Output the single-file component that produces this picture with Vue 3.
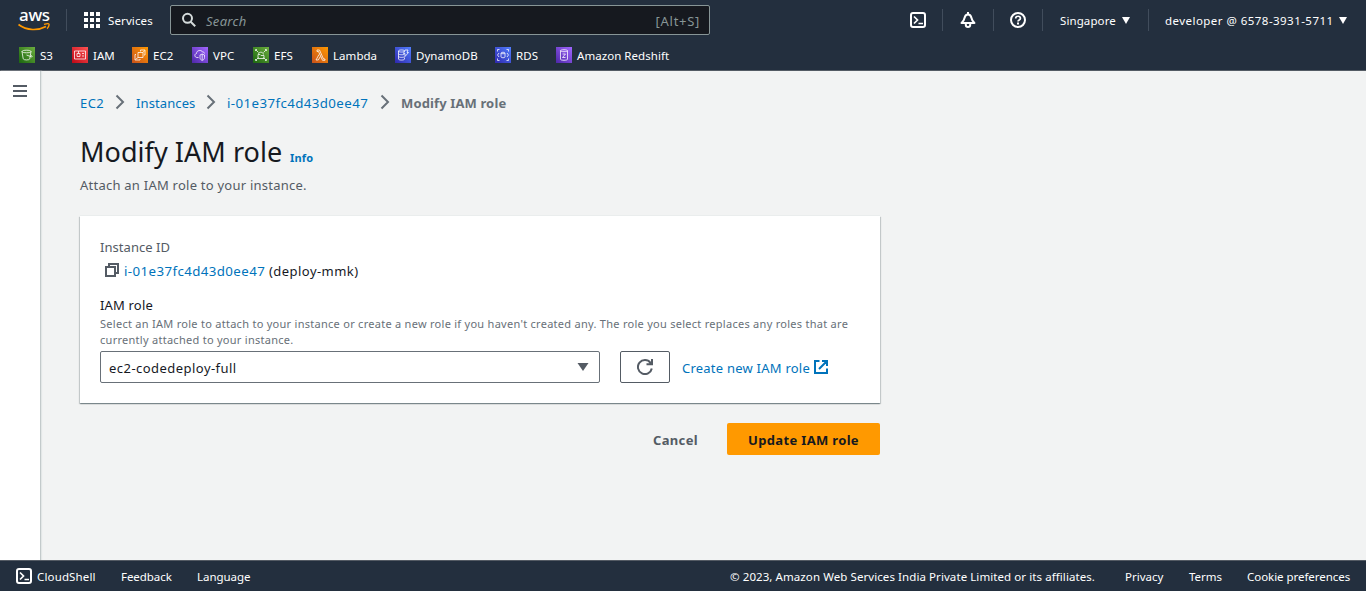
<script setup>
const services = [
  { name: 'S3', tone: 'green', icon: 's3' },
  { name: 'IAM', tone: 'red', icon: 'iam' },
  { name: 'EC2', tone: 'orange', icon: 'ec2' },
  { name: 'VPC', tone: 'purple', icon: 'vpc' },
  { name: 'EFS', tone: 'green', icon: 'efs' },
  { name: 'Lambda', tone: 'orange', icon: 'lambda' },
  { name: 'DynamoDB', tone: 'blue', icon: 'dynamo' },
  { name: 'RDS', tone: 'blue', icon: 'rds' },
  { name: 'Amazon Redshift', tone: 'purple', icon: 'redshift' }
]
const glyphs = {
  s3: 'M3 4.500C3 2.800 12 2.800 12 4.500S3 6.200 3 4.500l1.200 7.300c.3 1.500 6.300 1.500 6.600 0L12 4.500M7.500 8l4.800 1.800c1.300.500 1.300-.800-.600-1.700',
  iam: 'M2.500 4h11v8h-11zM5 6.500h3v3H5zM10 6.500h2M10 9h2M6.500 4v2.500',
  ec2: 'M6 5.500h5v5H6zM4 7.500H3v5.500h5v-1M8.500 4.500V3H13v5h-1M11 5.500l1.500-2M6 10.500l-2.500 2',
  vpc: 'M6.500 10.500H5C2.500 10.500 2 7 4.500 6.500 4.500 3 9.500 2.500 10.500 5c1.500 0 2 .700 2 1.500M8 8l2.200-1 2.300 1v2.500c0 1.500-.800 2.300-2.300 3C8.700 12.800 8 12 8 10.500zM10.200 7v6',
  efs: 'M3 3l2.500 2.500M13 3l-2.500 2.500M3 13l2.500-2.500M13 13l-2.500-2.500M5 7.500h2l1 1h3v3H5zM2.500 4V2.500H4M12 2.500h1.500V4M2.500 12v1.500H4M12 13.500h1.500V12M5.500 7C6 4.500 10 4.500 10.500 7.500',
  lambda: 'M5 3h2.500l4 9h1.500v1.300h-2.500L6.500 4.500H5zM7 7.500L4 13h2.300l2-3.500'
  , dynamo: 'M3.500 4c0-1.400 6-1.400 6 0s-6 1.400-6 0v8c0 1.400 6 1.400 6 0v-1.500M3.500 6.700c0 1.300 5 1.300 6 .500M3.500 9.300c0 1.300 5 1.300 6 .500M10 3h3l-1 2.500h1.500L10 9.500V6.500H8.500z',
  rds: 'M6 6c0-1 4-1 4 0v4c0 1-4 1-4 0zM6 6c0 1 4 1 4 0M2.500 4.500v-2h2M11.500 2.500h2v2M13.500 11.500v2h-2M4.500 13.500h-2v-2M4 6L2.500 8 4 10M12 6l1.500 2-1.500 2',
  redshift: 'M4.500 3.700c0-1.300 7-1.300 7 0s-7 1.300-7 0v8.600c0 1.300 7 1.300 7 0V3.700M6.500 7h3l-3 3.500h3'
}
</script>

<template>
  <div class="page">
    <header class="top">
      <div class="bar">
        <div class="aws">
          <span>aws</span>
          <svg viewBox="0 0 34 10" width="34" height="10" fill="none" stroke="#f90">
            <path d="M.500 2.500C9 8.800 20 8.800 28 4.500" stroke-width="1.700" />
            <path d="M26 2.400c3-.900 4.800-.800 5-.300.300.700-.500 3.500-2 4.500" stroke-width="1.400" />
          </svg>
        </div>
        <i class="sep"></i>
        <svg class="grid" width="16" height="16" viewBox="0 0 16 16">
          <path d="M0 0h4v4H0zM6 0h4v4H6zM12 0h4v4h-4zM0 6h4v4H0zM6 6h4v4H6zM12 6h4v4h-4zM0 12h4v4H0zM6 12h4v4H6zM12 12h4v4h-4z" fill="#fff" />
        </svg>
        <span class="services">Services</span>
        <div class="search">
          <svg width="16" height="16" viewBox="0 0 16 16" fill="none" stroke="#d5dbdb" stroke-width="2">
            <circle cx="5.500" cy="6.300" r="4.500" /><path d="M8.700 9.800l4.500 4.500" />
          </svg>
          <span class="placeholder">Search</span>
          <span class="key">[Alt+S]</span>
        </div>
        <div class="tools">
          <span class="tool">
            <svg width="16" height="16" viewBox="0 0 16 16" fill="none" stroke="#fff" stroke-width="2"><rect x="1" y="1" width="14" height="14" rx="2" /><path d="M4 4.500L7.500 8 4 11.500M8.500 11.500H13" stroke-width="1.700" /></svg>
          </span>
          <span class="tool bell">
            <svg width="16" height="16" viewBox="0 0 16 16" fill="none" stroke="#fff" stroke-width="2"><path d="M1.500 11C3.500 9.500 4 8.500 4.500 6 5 3.500 6.300 2.500 8 2.500S11 3.500 11.500 6c.500 2.500 1 3.500 3 5z" stroke-linejoin="round" /><path d="M8 0v2.500M5.800 12v1c0 2.600 4.400 2.600 4.400 0v-1" /></svg>
          </span>
          <span class="tool help">
            <svg width="16" height="16" viewBox="0 0 16 16" fill="none" stroke="#fff" stroke-width="2"><circle cx="8" cy="8" r="7" /><path d="M5.700 6.500c0-3 4.700-3 4.700 0 0 1.500-2.400 1.500-2.400 3" stroke-width="1.700" /><path d="M8 10.600v1.900" /></svg>
          </span>
          <span class="menu region"><span class="sing">Singapore</span><svg width="8" height="7" viewBox="0 0 8 7"><path d="M0 0h8L4 7z" fill="#fff" /></svg></span>
          <span class="menu account"><span class="dev">developer @ 6578-3931-5711</span><svg width="8" height="7" viewBox="0 0 8 7"><path d="M0 0h8L4 7z" fill="#fff" /></svg></span>
        </div>
      </div>
      <nav class="favs">
        <a v-for="s in services" :key="s.name">
          <span class="chip" :class="s.tone"><svg width="16" height="16" viewBox="0 0 16 16"><path :d="glyphs[s.icon]" /></svg></span>
          <span>{{ s.name }}</span>
        </a>
      </nav>
    </header>

    <div class="body">
      <aside><svg width="14" height="12" viewBox="0 0 14 12"><path d="M0 1h14M0 6h14M0 11h14" stroke="#545b64" stroke-width="2" /></svg></aside>
      <main>
        <nav class="crumbs">
          <a class="first">EC2</a>
          <svg width="10" height="16" viewBox="0 0 10 16"><path d="M1.500 1.500L8 8l-6.500 6.500" /></svg>
          <a class="inst">Instances</a>
          <svg width="10" height="16" viewBox="0 0 10 16"><path d="M1.500 1.500L8 8l-6.500 6.500" /></svg>
          <a class="id">i-01e37fc4d43d0ee47</a>
          <svg width="10" height="16" viewBox="0 0 10 16"><path d="M1.500 1.500L8 8l-6.500 6.500" /></svg>
          <b>Modify IAM role</b>
        </nav>
        <div class="title"><h1>Modify IAM role</h1><a>Info</a></div>
        <p class="sub">Attach an IAM role to your instance.</p>
        <section class="card">
          <div class="label">Instance ID</div>
          <div class="value">
            <svg width="14" height="14" viewBox="0 0 14 14" fill="none" stroke="#545b64" stroke-width="2"><path d="M1 4h9v9H1zM4 4V1h9v9h-3" /></svg>
            <a class="id">i-01e37fc4d43d0ee47</a><span class="nm">(deploy-mmk)</span>
          </div>
          <div class="field">IAM role</div>
          <div class="hint">
            <div>Select an IAM role to attach to your instance or create a new role if you haven't created any. The role you select replaces any roles that are</div>
            <div>currently attached to your instance.</div>
          </div>
          <div class="row">
            <div class="select"><span>ec2-codedeploy-full</span><svg width="12" height="8" viewBox="0 0 12 8"><path d="M.500 0h11L6 8z" fill="#545b64" /></svg></div>
            <button class="refresh"><svg width="16" height="16" viewBox="0 0 16 16" fill="none" stroke="#545b64" stroke-width="2"><path d="M14.800 9.500A7 7 0 1 1 13.500 3.800L15 5.300M15 0v5.300H9.500" /></svg></button>
            <a class="create">Create new IAM role</a>
            <svg class="ext" width="14" height="14" viewBox="0 0 14 14" fill="none" stroke="#0073bb" stroke-width="2"><path d="M5.500 1H1v12h12V8.500M8 1h5v5M13 1L5 9" /></svg>
          </div>
        </section>
        <div class="actions"><button class="cancel">Cancel</button><button class="update">Update IAM role</button></div>
      </main>
    </div>

    <footer>
      <svg width="16" height="16" viewBox="0 0 16 16" fill="none" stroke="#fff" stroke-width="2"><rect x="1" y="1" width="14" height="14" rx="2" /><path d="M4 4.500L7.500 8 4 11.500M8.500 11.500H13" stroke-width="1.700" /></svg>
      <span class="cs">CloudShell</span><span class="fb">Feedback</span><span class="lang">Language</span>
      <div class="legal"><span class="copy">© 2023, Amazon Web Services India Private Limited or its affiliates.</span><span>Privacy</span><span>Terms</span><span class="cookie">Cookie preferences</span></div>
    </footer>
  </div>
</template>

<style>
body { background: #f2f3f3; overflow: hidden; }
</style>

<style scoped>
* { box-sizing: border-box; }
.page { height: 591px; display: flex; flex-direction: column; font-family: "Noto Sans", "Open Sans", sans-serif; font-size: 13px; color: #16191f; white-space: nowrap; }
svg { display: block; flex: none; }
a { color: #0073bb; }
button { font: inherit; padding: 0; }
.top { height: 71px; background: #232f3e; border-bottom: 1px solid #545b64; color: #fff; font-size: 11.5px; flex: none; }
.bar { height: 40px; display: flex; align-items: center; padding-left: 18px; line-height: 16px; }
.aws { width: 34px; height: 26px; }
.aws span { display: block; font-size: 17px; font-weight: 500; line-height: 20px; height: 14px; margin-top: -2px; padding-left: 1px; letter-spacing: -.3px; }
.aws svg { margin-top: 3px; }
.sep { width: 1px; height: 22px; background: #414d5c; margin: 0 17px 0 14px; }
.grid { margin-right: 8px; }
.services { width: 62px; padding-top: 2px; letter-spacing: .12px; }
.search { width: 540px; height: 30px; border: 1px solid #879596; border-radius: 2px; background: #16191f; display: flex; align-items: center; padding: 0 9px 0 11px; color: #879596; font-size: 13px; }
.search span { padding-top: 1px; }
.placeholder { font-style: italic; margin-left: 8px; letter-spacing: .3px; }
.key { margin-left: auto; letter-spacing: .7px; }
.tools { display: flex; margin-left: auto; height: 22px; align-items: center; }
.tool { width: 50px; height: 22px; display: flex; align-items: center; justify-content: center; border-right: 1px solid #414d5c; }
.bell { width: 51px; padding-right: 1px; }
.help { width: 49px; }
.menu { height: 22px; display: flex; align-items: center; padding-left: 17px; }
.menu span { padding-top: 2px; }
.region { width: 106px; border-right: 1px solid #414d5c; }
.sing { width: 62px; letter-spacing: .1px; }
.account { width: 217px; padding-left: 16px; }
.dev { width: 174px; letter-spacing: .46px; }
.favs { height: 30px; padding: 0 0 0 19px; display: grid; grid-template-columns: 53px 60px 60px 61px 59px 83px 100px 61px auto; align-items: center; justify-content: start; }
.favs a { color: #fff; display: flex; align-items: center; gap: 5px; line-height: 16px; }
.favs a > span:last-child { padding-top: 2px; letter-spacing: .05px; }
.chip path { fill: none; stroke: #fff; stroke-opacity: .85; stroke-width: .9; }
.green { background: linear-gradient(45deg, #1b660f, #6cae3e); }
.red { background: linear-gradient(45deg, #bd0816, #ff5252); }
.orange { background: linear-gradient(45deg, #c8511b, #f90); }
.purple { background: linear-gradient(45deg, #4d27a8, #a166ff); }
.blue { background: linear-gradient(45deg, #2e27ad, #527fff); }
.body { flex: 1; display: flex; min-height: 0; }
aside { width: 41px; background: #fff; border-right: 1px solid #c3cacb; padding: 14px 0 0 13px; box-shadow: 1px 0 1px #e3e7e7; }
main { width: 840px; padding: 22px 0 0 39px; }
.crumbs { height: 20px; display: grid; grid-template-columns: 35px 21px 70px 21px 153px 21px auto; line-height: 20px; justify-content: start; }
.crumbs svg { margin-top: 1px; fill: none; stroke: #687078; stroke-width: 2; }
.crumbs b { color: #687078; letter-spacing: .13px; }
.first { letter-spacing: .4px; }
.inst { letter-spacing: .1px; }
.title { height: 40px; margin-top: 19px; display: flex; align-items: baseline; line-height: 40px; }
h1 { margin: 0 8px 0 0; font-size: 27px; font-weight: 400; width: 202px; letter-spacing: .05px; }
.title a { font-size: 11px; font-weight: 700; letter-spacing: .2px; }
.sub { margin: 2px 0 0; line-height: 22px; color: #545b64; letter-spacing: .24px; }
.card { width: 800px; height: 187px; margin-top: 20px; padding: 20px; background: #fff; box-shadow: 0 1px 1px 0 rgba(0,28,36,.3), 1px 1px 1px 0 rgba(0,28,36,.15), -1px 1px 1px 0 rgba(0,28,36,.15), 0 -1px 0 #eaeded; }
.label { color: #545b64; line-height: 22px; letter-spacing: .05px; }
.value { display: flex; align-items: center; height: 22px; margin-top: 2px; padding-left: 5px; }
.value a { margin-left: 5px; width: 145px; }
.value svg { margin-top: -2px; }
.nm { letter-spacing: .45px; }
.id { font-size: 13.3px; letter-spacing: .4px; }
.field { margin-top: 12px; line-height: 22px; letter-spacing: .17px; }
.hint { font-size: 11px; line-height: 16px; color: #687078; letter-spacing: .275px; }
.row { display: flex; align-items: center; margin-top: 3px; }
.select { width: 500px; height: 32px; border: 1px solid #687078; border-radius: 2px; display: flex; align-items: center; justify-content: space-between; padding: 2px 10px 0 8px; letter-spacing: .46px; }
.select svg { margin-top: -3px; }
.refresh { width: 50px; height: 32px; margin: 0 12px 0 20px; border: 1px solid #545b64; border-radius: 2px; background: #fff; display: flex; align-items: center; justify-content: center; }
.create { width: 132px; padding-top: 2px; letter-spacing: .23px; }
.actions { display: flex; margin-top: 20px; height: 32px; }
.cancel, .update { border: 0; font-weight: 700; background: none; padding-top: 2px; letter-spacing: .34px; }
.cancel { color: #545b64; margin-left: 573px; width: 74px; text-align: left; }
.update { width: 153px; background: #f90; color: #16191f; border-radius: 2px; }
footer { height: 31px; flex: none; background: #232f3e; border-top: 1px solid #545b64; color: #fff; font-size: 11.5px; line-height: 16px; display: flex; align-items: center; padding-left: 16px; }
footer > span { padding-top: 1px; }
.cs { margin-left: 5px; width: 84px; letter-spacing: .15px; }
.fb { width: 76px; letter-spacing: -.05px; }
.lang { letter-spacing: -.05px; }
.legal { padding-top: 1px; margin-left: auto; width: 636px; display: grid; grid-template-columns: 395px 64px 58px auto; justify-content: start; }
.copy { letter-spacing: .08px; }
.cookie { letter-spacing: -.04px; }
</style>
